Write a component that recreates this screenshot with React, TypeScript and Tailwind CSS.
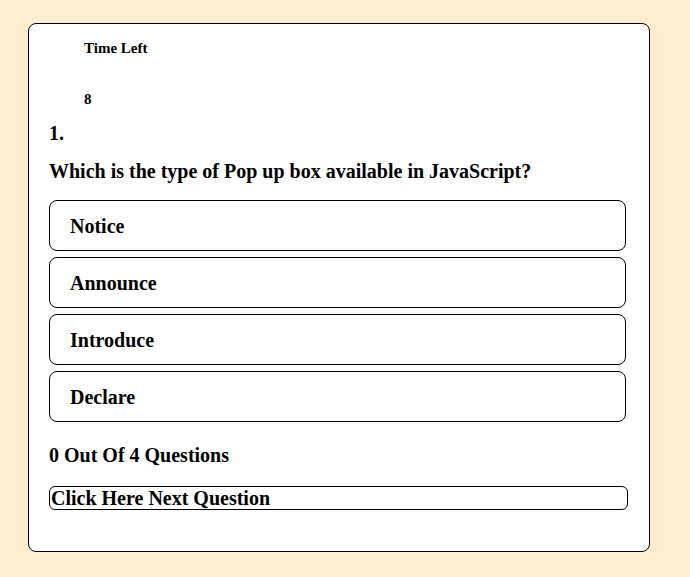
const options = ['Notice', 'Announce', 'Introduce', 'Declare']

export default function App() {
  return (
    <div className="min-h-[577px] w-full bg-[#ffebcd] pt-[23px] pl-[28px] font-['Liberation_Serif',serif] font-bold text-black">
      <div className="w-[622px] h-[529px] rounded-lg border border-black bg-white px-[20px] pt-[16px]">
        <div className="ml-[35px] text-[15px] leading-[17px]">Time Left</div>
        <div className="ml-[35px] mt-[34px] text-[15px] leading-[17px]">8</div>
        <div className="mt-[14px] text-[20px] leading-[23px]">1.</div>
        <div className="mt-[15px] text-[20px] leading-[23px]">
          Which is the type of Pop up box available in JavaScript?
        </div>
        <div className="mt-[17px] flex flex-col gap-[6px]">
          {options.map((opt) => (
            <div
              key={opt}
              className="flex h-[51px] w-[577px] items-center rounded-lg border border-black pl-[20px] text-[20px]"
            >
              {opt}
            </div>
          ))}
        </div>
        <div className="mt-[22px] text-[20px] leading-[23px]">0 Out Of 4 Questions</div>
        <button className="mt-[19px] flex h-[24px] w-[579px] items-center rounded-md border border-black px-[1px] text-left text-[20px] font-bold">
          Click Here Next Question
        </button>
      </div>
    </div>
  )
}
